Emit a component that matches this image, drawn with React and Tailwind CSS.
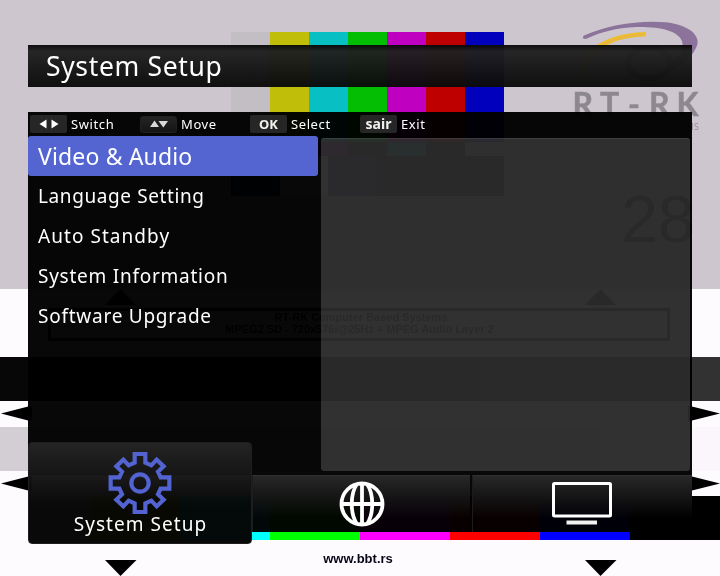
import React from "react";

const hints = [
  { key: "switch", label: "Switch" },
  { key: "move", label: "Move" },
  { key: "ok", label: "Select" },
  { key: "exit", label: "Exit" },
];

const menu = [
  { label: "Language Setting", spacing: "tracking-[0.6px]" },
  { label: "Auto Standby", spacing: "tracking-[1.05px]" },
  { label: "System Information", spacing: "tracking-[0.75px]" },
  { label: "Software Upgrade", spacing: "tracking-[0.75px]" },
];

function TestCard() {
  return (
    <div className="flex h-[576px] w-[720px] flex-col">
      <div className="h-[289px] bg-[#cdc6ce] pt-8 pl-[231px]">
        <div className="flex h-[110px] w-[273px]">
          <div className="flex-1 bg-[#c3bec4]" />
          <div className="flex-1 bg-[#c1be0a]" />
          <div className="flex-1 bg-[#08bfc4]" />
          <div className="flex-1 bg-[#04be04]" />
          <div className="flex-1 bg-[#c000c0]" />
          <div className="flex-1 bg-[#be0000]" />
          <div className="flex-1 bg-[#0000bd]" />
        </div>
        <div className="flex h-[14px] w-[273px]">
          <div className="flex-1 bg-[#0000bd]" />
          <div className="flex-1 bg-black" />
          <div className="flex-1 bg-[#900090]" />
          <div className="flex-1 bg-black" />
          <div className="flex-1 bg-[#08bfc4]" />
          <div className="flex-1 bg-black" />
          <div className="flex-1 bg-[#c3bec4]" />
        </div>
        <div className="flex h-10 w-[273px]">
          <div className="w-[49px] bg-[#00214c]" />
          <div className="w-12 bg-[#fefbff]" />
          <div className="w-[49px] bg-[#32006a]" />
          <div className="flex-1 bg-black" />
        </div>
      </div>
      <div className="h-[68px] bg-[#fefbff] px-12 pt-[19px]">
        <div className="h-[33px] w-[622px] border-[3px] border-black pl-1 text-center font-['Liberation_Sans',sans-serif] text-[11px] leading-3 font-bold whitespace-nowrap text-black">
          <div>RT-RK Computer Based Systems</div>
          <div className="pr-[3px] tracking-[-0.02px]">MPEG2 SD - 720x576i@25Hz + MPEG Audio Layer 2</div>
        </div>
      </div>
      <div className="flex h-11">
        <div className="w-[240px] bg-[#070707]" />
        <div className="w-[240px] bg-[#1b1b1b]" />
        <div className="w-[240px] bg-[#323233]" />
      </div>
      <div className="h-[26px] bg-[#fefbff]" />
      <div className="flex h-11">
        <div className="w-[240px] bg-[#d3cdd4]" />
        <div className="w-[360px] bg-[#e8e2e9]" />
        <div className="w-[120px] bg-[#fbf6fc]" />
      </div>
      <div className="h-[25px] bg-[#fefbff]" />
      <div className="grid h-11 grid-cols-8">
        <div className="bg-[#fefbff]" />
        <div className="bg-[#ffff00]" />
        <div className="bg-[#00ffff]" />
        <div className="bg-[#00ff00]" />
        <div className="bg-[#ff00ff]" />
        <div className="bg-[#ff0000]" />
        <div className="bg-[#0000ff]" />
        <div className="bg-black" />
      </div>
      <div className="h-9 bg-[#fefbff] pt-[11px] pr-1 text-center font-['Liberation_Sans',sans-serif] text-[13px] leading-4 font-bold text-[#080818]">
        www.bbt.rs
      </div>
    </div>
  );
}

function Markings() {
  return (
    <svg className="absolute top-0 left-0" width="720" height="576" viewBox="0 0 720 576">
      <g fill="#000">
        <path d="M120.500 289L136 305H105ZM600.500 289L616 305H585ZM105 560H136.500L120.500 576ZM585 560H616.500L600.500 576Z" />
        <path d="M1 413.500L32 405.500V421.500ZM1 483.500L32 475.500V491.500ZM720 413.500L688 405.500V421.500ZM720 483.500L688 475.500V491.500Z" />
      </g>
      <path
        d="M584 35.500C607 25 640 20 665 22.300C692 25 702 38 696 48C690 61 674 72 650 80C668 68 684 56 682.500 43C680 30 658 26.500 636 27C616 28 601 32 587 38.500C583 40 582 37 584 35.500Z"
        fill="#8c739b"
      />
      <path d="M645 32C622 33 607 38 594 47C580 58 574 72 584 84C581 70 590 58 604 47C617 39 631 37 645 36.500C646.500 35 646.500 33 645 32Z" fill="#edbd2c" />
      <path d="M643 34.500C625 36 610 40 600 47" fill="none" stroke="#ddb064" strokeWidth="0.8" />
      <path d="M628 63a21 15 0 1 0 42 0a21 15 0 1 0-42 0" fill="none" stroke="#77747b" strokeWidth="6" />
      <text x="572.500 600 628 649 676.500" y="115.500" fontFamily="Lato, sans-serif" fontWeight="700" fontSize="32" stroke="#8d8890" strokeWidth="0.5" fill="#8d8890">
        RT-RK
      </text>
      <text x="574" y="129.500" fontFamily="'Open Sans', sans-serif" fontSize="9" textLength="125" fill="#948e97">
        COMPUTER BASED SYSTEMS
      </text>
      <text x="621" y="242" fontFamily="'Liberation Sans', sans-serif" fontSize="67" textLength="74" fill="#000">
        28
      </text>
    </svg>
  );
}

function KeyCap({ name }) {
  const base = "flex h-[18px] w-[37px] items-center justify-center rounded-[2px] bg-[#262626]";
  if (name === "switch")
    return (
      <div className={base}>
        <svg width="20" height="10" viewBox="0 0 20 10" fill="#fff">
          <path d="M7.500 .5V9.500L.5 5ZM12.500 .5V9.500L19.500 5Z" />
        </svg>
      </div>
    );
  if (name === "move")
    return (
      <div className="flex h-[17px] w-[37px] items-center justify-center rounded-[3px] border border-[#202020] bg-linear-to-b from-[#242424] to-[#151515]">
        <svg width="18" height="8" viewBox="0 0 18 8" fill="#d8d8d8">
          <path d="M0 7L4.500 .5L9 7ZM8.500 1H18L13.300 7.500Z" />
        </svg>
      </div>
    );
  return (
    <div className={base}>
      <span className="font-['Noto_Sans',sans-serif] text-[13px] leading-[18px] font-bold text-[#f0f0ec]">
        {name === "ok" ? "OK" : <span className="text-[14px]">sair</span>}
      </span>
    </div>
  );
}

function Gear() {
  return (
    <svg width="64" height="64" viewBox="-96 -96 192 192" fill="none" stroke="#5364d2" strokeWidth="12.500">
      <path d="M-16-87H16V-61L34-53L50-70L71-50L54-34L62-17H88V17H62L54 34L71 50L50 70L34 53L16 61V87H-16V61L-34 53L-50 70L-71 50L-54 34L-62 17H-88V-17H-62L-54-34L-71-50L-50-70L-34-53L-16-61Z" />
      <circle r="26" />
    </svg>
  );
}

function Globe() {
  return (
    <svg width="46" height="46" viewBox="-23 -23 46 46" fill="none" stroke="#fff" strokeWidth="3.800">
      <circle r="20.500" />
      <path d="M0-20V20M-20 0H20M-5-20C-12-10-12 10-5 20M5-20C12-10 12 10 5 20" />
    </svg>
  );
}

function Television() {
  return (
    <svg width="60" height="43" viewBox="0 0 60 43">
      <rect x="1.500" y="1.500" width="57" height="32.500" rx="1" fill="none" stroke="#fff" strokeWidth="3" />
      <path d="M14.500 38.500H45V42.500H14.500Z" fill="#f2f2f2" />
    </svg>
  );
}

function Menu() {
  return (
    <div className="absolute top-[45px] left-7 w-[664px] font-['Noto_Sans',sans-serif] text-white">
      <header className="flex h-[42px] items-center bg-linear-to-b from-[#080808]/97 via-[#212121]/97 via-15% to-[#0a0a0a]/97 pl-[18px]">
        <h1 className="text-[26.5px] leading-[42px] tracking-[0.65px]">System Setup</h1>
      </header>
      <div className="mt-[25px] flex h-[363px] flex-col bg-black/97">
        <div className="grid h-6 grid-cols-[110px_110px_110px_1fr] pt-[3px] pl-[2px]">
          {hints.map((h) => (
            <div key={h.key} className="flex h-[18px] items-center gap-1">
              <KeyCap name={h.key} />
              <span className="text-[13px] leading-[18px] tracking-[0.6px]">{h.label}</span>
            </div>
          ))}
        </div>
        <div className="flex gap-[3px]">
          <nav className="w-[290px]">
            <div className="flex h-10 items-center rounded-[3px] bg-[#5465d2] pt-px pl-[10px] text-[23px] tracking-[0.15px]">
              Video &amp; Audio
            </div>
            {menu.map((m) => (
              <div key={m.label} className="flex h-10 items-center pt-px pl-[10px] text-[19px]">
                <span className={m.spacing}>{m.label}</span>
              </div>
            ))}
          </nav>
          <section className="mt-[2px] h-[333px] w-[369px] rounded-[3px] border-t border-[#3a3a3a] bg-[#292929] mix-blend-plus-lighter" />
        </div>
      </div>
      <div className="-mt-[33px] flex h-[102px] items-start">
        <div className="relative flex h-[102px] w-[224px] flex-col items-center rounded-[4px] border border-[#1f1f1f] bg-linear-to-b from-[#242424] via-[#141414]/98 via-35% to-[#040404]/98 to-65% pt-2 pr-px">
          <Gear />
          <span className="-mt-[2px] ml-[2px] text-[19px] leading-[22px] tracking-[1.05px]">System Setup</span>
        </div>
        <div className="mt-[33px] flex h-[57px] flex-1 gap-[2px] bg-black/97">
          <div className="flex w-[218px] items-center justify-center border-t border-l border-t-[#303030] border-l-[#1c1c1c] bg-linear-to-b from-[#282828] via-[#161616]/97 via-36% to-transparent to-75% pb-px">
            <Globe />
          </div>
          <div className="flex flex-1 items-center justify-center border-t border-l border-t-[#303030] border-l-[#1c1c1c] bg-linear-to-b from-[#282828] via-[#161616]/97 via-36% to-transparent to-75% pr-[2px] pb-px">
            <Television />
          </div>
        </div>
      </div>
    </div>
  );
}

export default function App() {
  return (
    <main className="relative h-[576px] w-[720px] overflow-hidden">
      <TestCard />
      <Markings />
      <Menu />
    </main>
  );
}
